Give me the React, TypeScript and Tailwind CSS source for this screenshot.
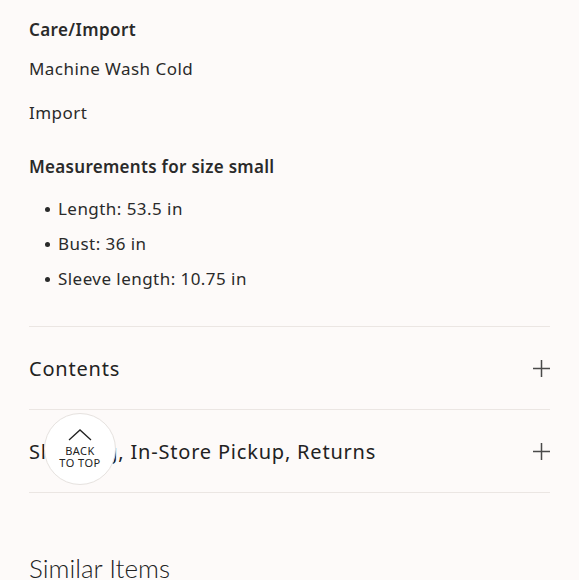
const sizes = ['Length: 53.5 in', 'Bust: 36 in', 'Sleeve length: 10.75 in'];

function AccordionRow({ title }: { title: string }) {
  return (
    <div className="flex h-[83px] items-center justify-between border-b border-[#ebe6e3]">
      <span className="pt-[2px] text-[20px] tracking-[0.8px] text-[#222]">{title}</span>
      <svg width="17" height="17" viewBox="0 0 17 17" fill="none" className="mt-[1px]">
        <path d="M8.5 0 V17 M0 8.5 H17" stroke="#4a4a4a" strokeWidth="1.5" />
      </svg>
    </div>
  );
}

export default function App() {
  return (
    <div className="relative h-[580px] overflow-hidden bg-[#fdfaf9] font-['Noto_Sans',sans-serif] text-[#2a2a2a]">
      <div className="px-[29px]">
        <h3 className="pt-[19px] text-[17px] font-semibold leading-[22px] tracking-[0.4px]">Care/Import</h3>
        <p className="mt-[17px] text-[17px] leading-[22px] tracking-[0.45px]">Machine Wash Cold</p>
        <p className="mt-[22px] text-[17px] leading-[22px] tracking-[0.45px]">Import</p>
        <h3 className="mt-[32px] text-[17px] font-semibold leading-[22px] tracking-[0.3px]">Measurements for size small</h3>
        <ul className="mt-[20px] flex flex-col gap-[13px] pl-[16px]">
          {sizes.map((s) => (
            <li key={s} className="flex items-center gap-[8px] text-[17px] leading-[22px] tracking-[0.45px]">
              <span className="h-[5px] w-[5px] rounded-full bg-[#2a2a2a]" />
              {s}
            </li>
          ))}
        </ul>
        <div className="mt-[36px] border-t border-[#ebe6e3]">
          <AccordionRow title="Contents" />
          <AccordionRow title="Shipping, In-Store Pickup, Returns" />
        </div>
        <h2 className="mt-[58px] font-['Lato',sans-serif] text-[26px] font-light leading-[34px] text-[#222]">Similar Items</h2>
      </div>

      <button className="absolute left-[44px] top-[413px] flex h-[72px] w-[72px] flex-col items-center justify-center rounded-full border border-[#e6e2df] bg-white text-[#222]">
        <svg width="24" height="12" viewBox="0 0 24 12" fill="none" className="mb-[4px]">
          <path d="M1 11 L12 1 L23 11" stroke="#222" strokeWidth="1.3" />
        </svg>
        <span className="text-[11px] leading-[12px] tracking-[0.5px]">BACK</span>
        <span className="text-[11px] leading-[12px] tracking-[0.5px]">TO TOP</span>
      </button>
    </div>
  );
}
